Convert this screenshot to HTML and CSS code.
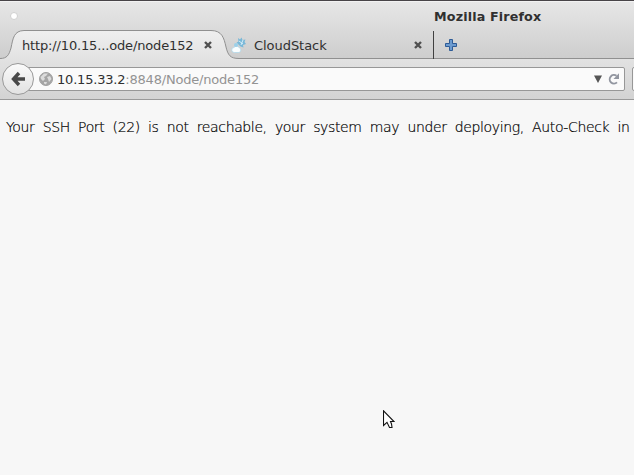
FILE: index.html
```html
<!DOCTYPE html>
<html lang="en">
<head>
<meta charset="utf-8">
<title>Mozilla Firefox</title>
<link rel="stylesheet" href="styles.css">
</head>
<body>
<div class="browser">
  <header class="chrome">
    <div class="titlebar"><span class="menu-dot"></span><span class="window-title">Mozilla Firefox</span></div>
    <nav class="tabs">
      <svg class="tab-shape" width="634" height="30" viewBox="0 0 634 30">
        <defs><linearGradient id="tab" x1="0" y1="0" x2="0" y2="1"><stop offset="0" stop-color="#efefef"/><stop offset="1" stop-color="#e2e2e2"/></linearGradient></defs>
        <path d="M0 28.5C7 28.5 9 25 11 18C13 8 14 .8 24 .5H211C222 .5 224 8 226 17C228 25 230 28.5 239 28.5V30H0Z" fill="url(#tab)"/>
        <path d="M0 28.5C7 28.5 9 25 11 18C13 8 14 .8 24 .5H211C222 .5 224 8 226 17C228 25 230 28.5 239 28.5H634" fill="none" stroke="#909090"/>
      </svg>
      <div class="tab tab-current">
        <span class="tab-label">http://10.15...ode/node152</span>
        <svg class="close" width="8" height="8" viewBox="0 0 8 8"><path d="M1 1L7 7M7 1L1 7"/></svg>
      </div>
      <div class="tab tab-other">
        <svg class="favicon" width="16" height="16" viewBox="0 0 16 16"><path d="M7 1l2 1.500 1.500-2 1 2.500 3-.5-1 2.500 1.500 2-3 1 .5 2.500-3-1-2-2-2-2 2-1Z" fill="#78b8d8"/><path d="M8 4l4 3M12 3l-2 5" stroke="#d4edf8"/><path d="M3.500 15.500a2.500 2.500 0 0 1-.5-5 3 3 0 0 1 5 0 2.600 2.600 0 0 1 0 5Z" fill="#fafeff" stroke="#a9d6ea" stroke-width=".7"/><circle cx="5" cy="8" r="2" fill="#9bd0e9"/></svg>
        <span class="tab-label">CloudStack</span>
        <svg class="close" width="8" height="8" viewBox="0 0 8 8"><path d="M1 1L7 7M7 1L1 7"/></svg>
      </div>
      <svg class="new-tab" width="12" height="12" viewBox="0 0 12 12"><path d="M4.500 .5h3v4h4v3h-4v4h-3v-4h-4v-3h4Z" fill="#6c9bd0" stroke="#2e5b96"/></svg>
    </nav>
    <div class="toolbar">
      <div class="address">
        <svg class="globe" width="14" height="14" viewBox="0 0 14 14"><circle cx="7" cy="7" r="6.500" fill="#a5a5a5" stroke="#a0a0a0"/><path d="M1.500 5L5 1.500 9 1.500 7 4 5 5 6 7 4 9 2 7ZM8 5L11 4 12.500 7 10 10 9 7ZM5 10l3 0-1 2.500-2-1Z" fill="#dcdcdc"/></svg>
        <span class="url"><b>10.15.33.2</b>:8848/Node/node152</span>
        <svg class="drop" width="8" height="8" viewBox="0 0 8 8"><path d="M0 .5H8L4 8Z" fill="#555"/></svg>
        <svg class="reload" width="12" height="12" viewBox="0 0 12 12"><path d="M8.500 2.800A4.300 4.300 0 1 0 9 9.400" fill="none" stroke="#9296a0" stroke-width="1.900"/><path d="M11 .2V6H5.500Z" fill="#9296a0"/></svg>
      </div>
      <div class="search"></div>
      <div class="back"><svg width="15" height="16" viewBox="0 0 15 16"><path d="M8 2L2.500 8L8 14M3 8H14" fill="none" stroke="#484848" stroke-width="3.400"/></svg></div>
    </div>
  </header>
  <main class="page"><p class="message">Your SSH Port (22) is not reachable, your system may under deploying, Auto-Check in</p></main>
  <svg class="pointer" width="12" height="20" viewBox="0 0 12 20"><path d="M.5 .8V15.500L4 12.300 6.500 17.500H9L8.500 14 7.500 11.500H11Z" fill="#fff" stroke="#111" stroke-width="1.100"/></svg>
</div>
</body>
</html>
```
FILE: styles.css
```css
* { box-sizing: border-box; }
body { margin: 0; background: #f7f7f7; font-family: "DejaVu Sans", sans-serif; font-size: 13px; color: #303030; }
.browser { position: relative; width: 634px; height: 475px; overflow: hidden; }
.chrome { height: 100px; border-top: 1px solid #484448; border-bottom: 1px solid #999; background: linear-gradient(#e7e7e7, #cdcdcd 58px, #e2e2e2 58px, #d3d3d3); }
.titlebar { display: flex; align-items: center; height: 29px; border-top: 1px solid #f2f2f2; padding-left: 10px; }
.menu-dot { width: 8px; height: 8px; border: 1px solid #d0d0d0; border-radius: 50%; background: #fff; }
.window-title { margin-left: 416px; font-weight: bold; font-size: 12.7px; letter-spacing: .15px; }
.tabs { position: relative; display: flex; align-items: center; height: 30px; }
.tab-shape { position: absolute; left: 0; top: 0; }
.tab { position: relative; display: flex; align-items: center; height: 28px; }
.tab-current { width: 230px; padding: 0 18px 0 22px; justify-content: space-between; }
.tab-current .tab-label { letter-spacing: -.15px; }
.tab-other { width: 204px; border-right: 1px solid #404040; padding-right: 11px; }
.tab-other .tab-label { margin: 0 auto 0 7px; letter-spacing: -.05px; }
.favicon { margin-left: 1px; }
.close { stroke: #505050; stroke-width: 2.4; }
.new-tab { position: relative; margin-left: 11px; }
.toolbar { position: relative; display: flex; padding: 7px 0 0 20px; height: 39px; }
.address { display: flex; flex: none; align-items: center; width: 605px; height: 24px; padding: 0 4px 0 18px; border: 1px solid #979797; border-radius: 2px; background: #fafafa; }
.url { margin: 0 auto 0 4px; color: #939393; letter-spacing: -.2px; }
.url b { font-weight: normal; color: #303030; }
.drop { margin-right: 6px; }
.search { width: 20px; height: 24px; margin-left: 7px; flex: none; border: 1px solid #979797; border-radius: 2px; background: #fafafa; }
.back { position: absolute; left: 2px; top: 3px; width: 32px; height: 32px; display: flex; align-items: center; justify-content: center; border: 1px solid #999; border-radius: 50%; background: linear-gradient(#fafafa, #e2e2e2); }
.page { padding: 17px 0 0 6px; }
.message { margin: 0; font: 200 14px/20px "DejaVu Sans Light", "DejaVu Sans", sans-serif; letter-spacing: -.37px; word-spacing: 4.15px; white-space: nowrap; color: #000; -webkit-text-stroke: .2px #000; }
.pointer { position: absolute; left: 383px; top: 410px; }
```
